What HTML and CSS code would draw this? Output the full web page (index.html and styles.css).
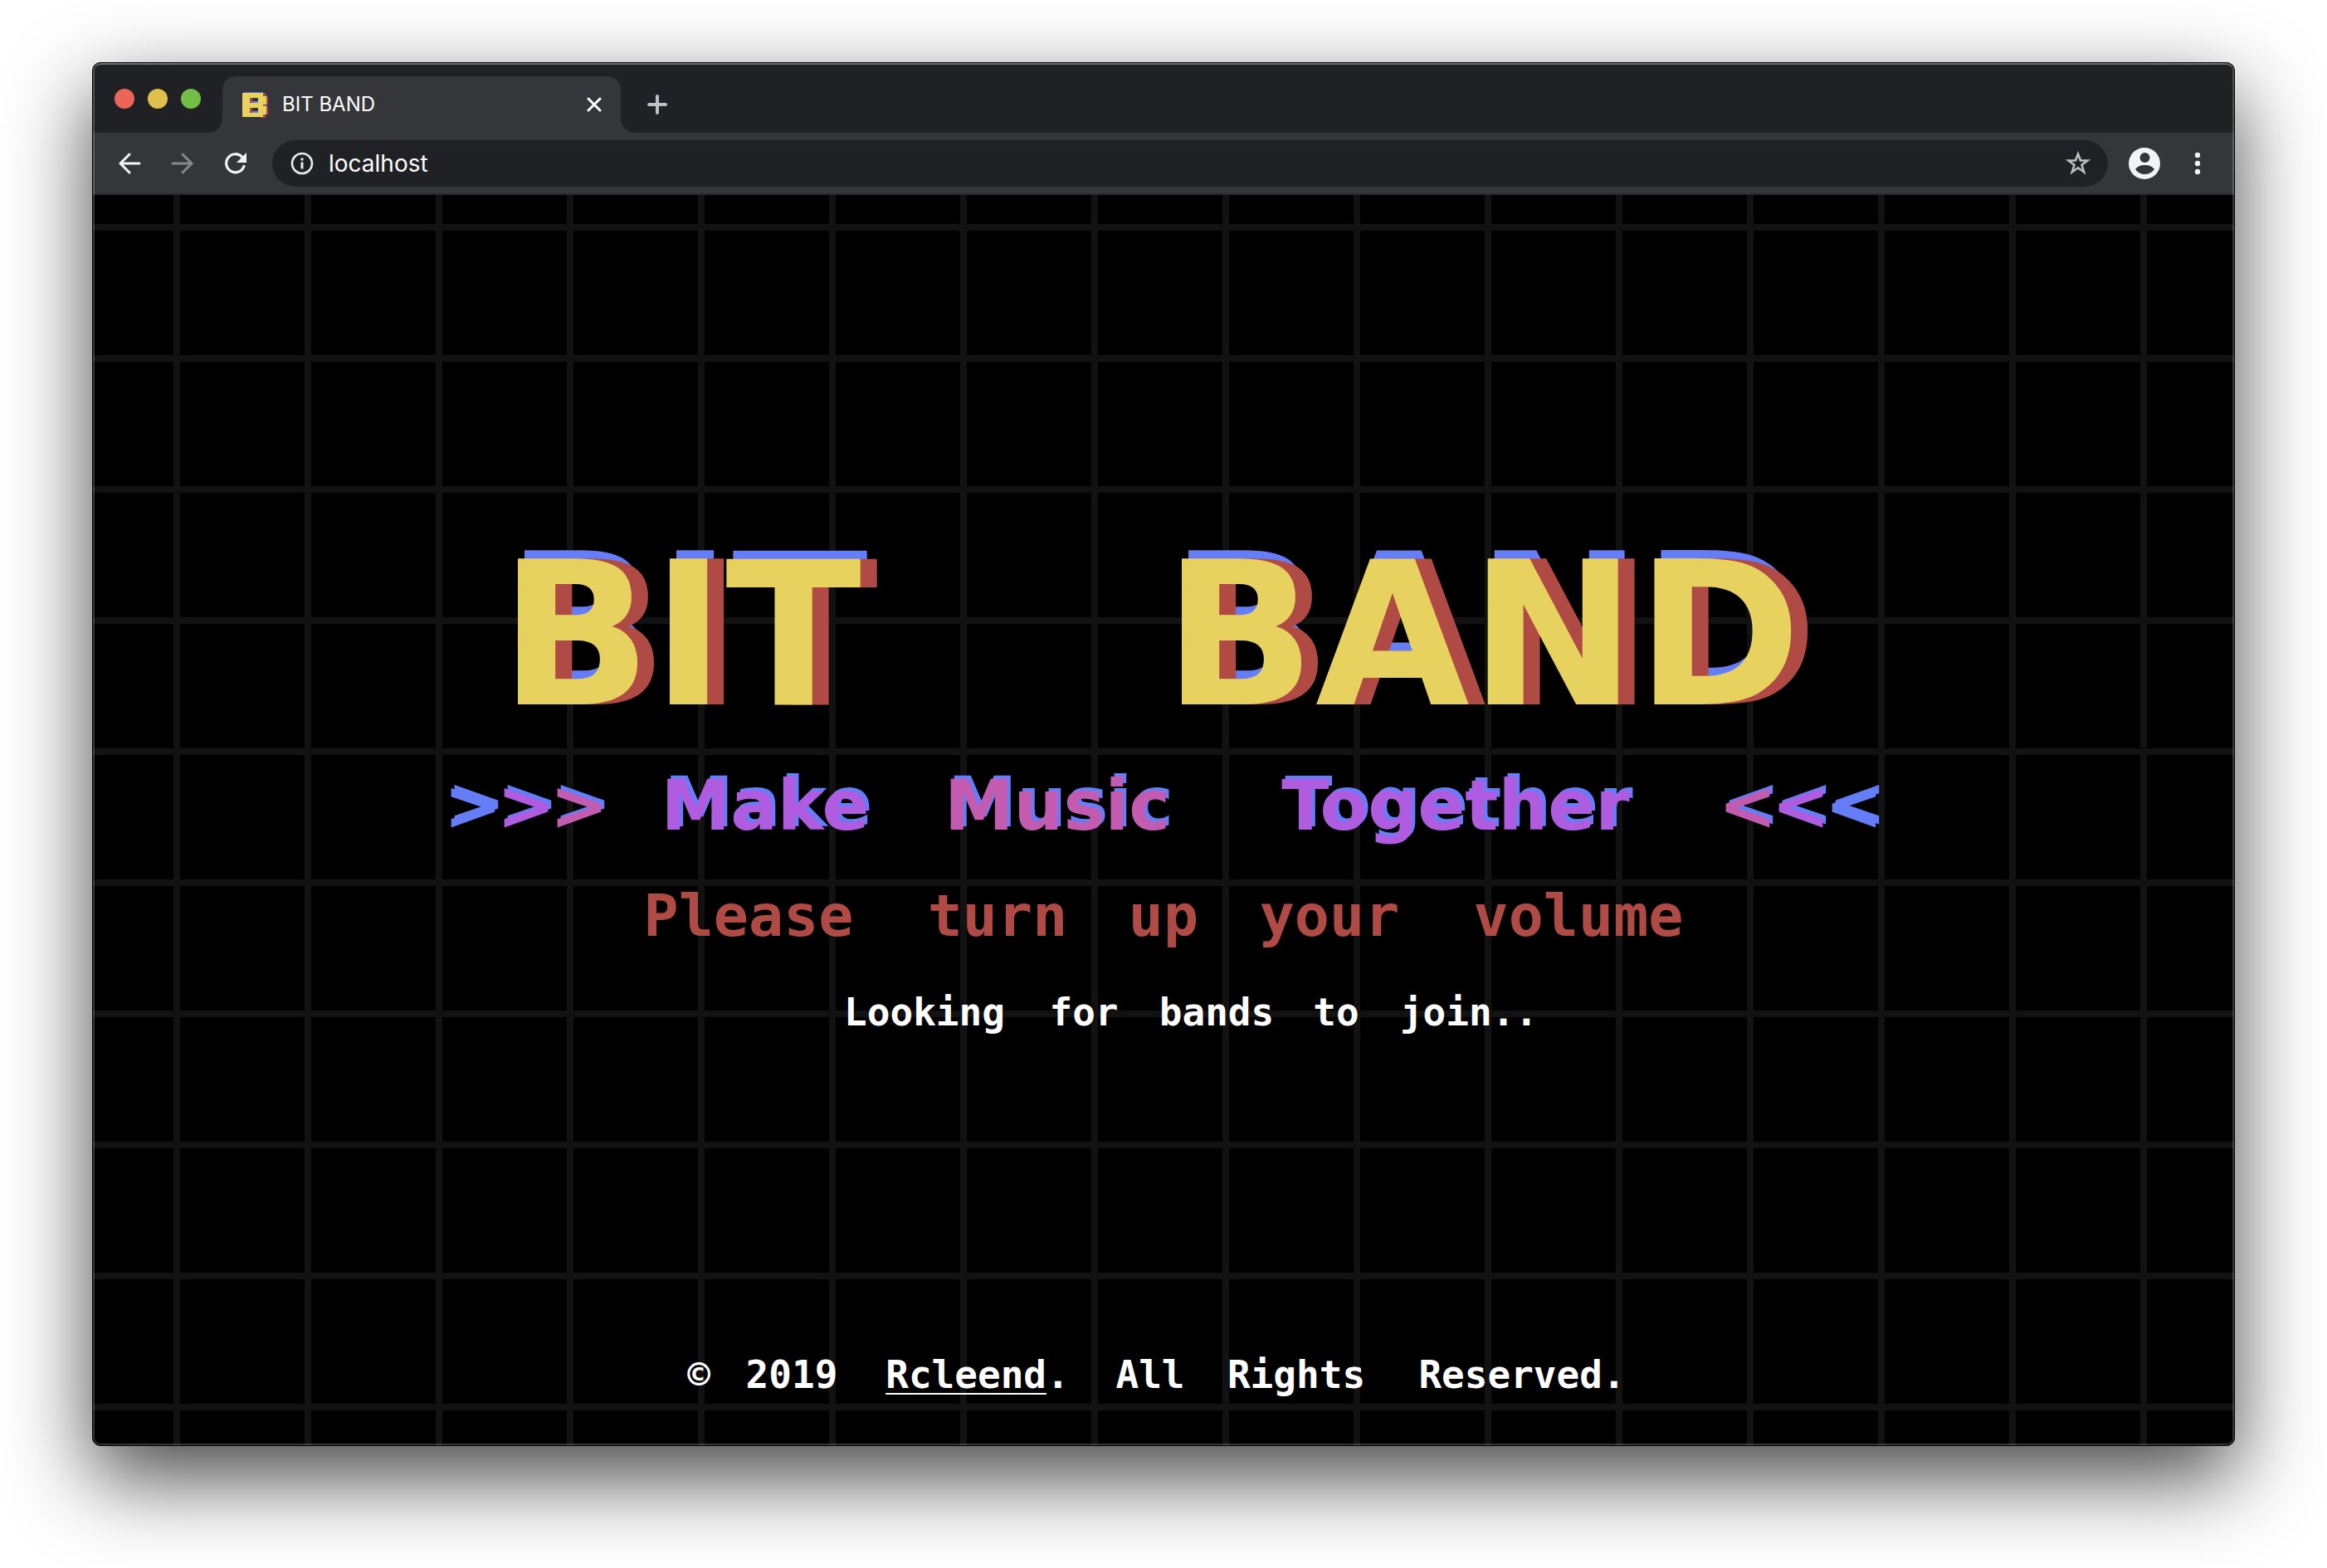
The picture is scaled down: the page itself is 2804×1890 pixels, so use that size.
FILE: index.html
```html
<!DOCTYPE html>
<html lang="en">
<head>
<meta charset="utf-8">
<title>BIT BAND</title>
<link rel="stylesheet" href="styles.css">
</head>
<body>
<div class="window">
  <header class="tabs">
    <div class="lights">
      <button class="light red" aria-label="Close window"></button>
      <button class="light amber" aria-label="Minimise window"></button>
      <button class="light green" aria-label="Zoom window"></button>
    </div>
    <div class="tab">
      <svg class="favicon" viewBox="0 0 32 32" shape-rendering="crispEdges" aria-hidden="true">
        <path fill="#5f6fd0" d="M2 1h24v4H2zM27 5h3v4h-3zM27 17h3v3h-3z"/>
        <path fill="#b04a44" d="M22 2h6v4h3v10h-3v3h3v9h-3v4h-6z"/>
        <path fill="#e8d25f" fill-rule="evenodd" d="M0 2h25v4h4v10h-4v2h4v10h-4v3H0zM9 8v6h10V8zM9 20v6h10v-6z"/>
        <path fill="#b04a44" d="M9 8h3v6H9zM9 20h3v6H9z"/>
        <path fill="#657ef7" d="M12 12h7v2h-7zM12 24h7v2h-7z"/>
      </svg>
      <span class="tab-title">BIT BAND</span>
      <button class="icon-button" aria-label="Close tab">
        <svg width="18" height="18" viewBox="0 0 18 18" fill="none" stroke="#fff" stroke-width="3" stroke-linecap="round"><path d="M2 2l14 14M16 2L2 16"/></svg>
      </button>
    </div>
    <button class="icon-button new-tab" aria-label="New tab">
      <svg width="24" height="24" viewBox="0 0 24 24" fill="none" stroke="#bdc1c6" stroke-width="4" stroke-linecap="round"><path d="M12 2v20M2 12h20"/></svg>
    </button>
  </header>

  <nav class="toolbar">
    <div class="nav-buttons">
      <button class="icon-button" aria-label="Back">
        <svg width="28" height="28" viewBox="0 0 28 28" fill="none" stroke="#f1f3f4" stroke-width="3" stroke-linecap="round"><path d="M26 14H3M14 3L3 14l11 11"/></svg>
      </button>
      <button class="icon-button" aria-label="Forward">
        <svg width="28" height="28" viewBox="0 0 28 28" fill="none" stroke="#87888a" stroke-width="3" stroke-linecap="round"><path d="M2 14h23M14 3l11 11-11 11"/></svg>
      </button>
      <button class="icon-button" aria-label="Reload">
        <svg width="28" height="28" viewBox="0 0 28 28"><path d="M24 17.500A11 11 0 1 1 21.500 6" fill="none" stroke="#f1f3f4" stroke-width="3.200" stroke-linecap="round"/><path fill="#f1f3f4" d="M27 1v12H15z"/></svg>
      </button>
    </div>
    <div class="address">
      <svg width="28" height="28" viewBox="0 0 28 28" aria-hidden="true"><circle cx="14" cy="14" r="12" fill="none" stroke="#e8eaed" stroke-width="2.600"/><path fill="#e8eaed" d="M12.500 7.500h3v3h-3zM12.500 12.500h3v8h-3z"/></svg>
      <input class="url" type="text" value="localhost" aria-label="Address">
      <button class="icon-button" aria-label="Bookmark this tab">
        <svg width="32" height="32" viewBox="0 0 32 32" fill="none" stroke="#bdbdbd" stroke-width="2.600"><path d="M16 4.500l3 8h8.500l-7 5.300 2.700 8.700-7.200-5.200-7.200 5.200 2.700-8.700-7-5.300H13z"/></svg>
      </button>
    </div>
    <button class="icon-button" aria-label="Profile">
      <svg width="38" height="38" viewBox="0 0 38 38"><circle cx="19" cy="19" r="19" fill="#f1f3f4"/><circle cx="19.500" cy="12" r="6" fill="#35363a"/><path fill="#35363a" d="M8 26c3-4 7-5 11.500-5S28 22 31 26c-3 4-7 6-11.500 6S11 30 8 26z"/></svg>
    </button>
    <button class="icon-button menu" aria-label="Menu">
      <svg width="8" height="28" viewBox="0 0 8 28" fill="#f1f3f4"><circle cx="4" cy="4" r="3.200"/><circle cx="4" cy="14" r="3.200"/><circle cx="4" cy="24" r="3.200"/></svg>
    </button>
  </nav>

  <div class="page">
    <main class="hero">
      <h1 class="line title"><span class="w3">BIT</span> <span class="w4">BAND</span></h1>
      <h2 class="line tagline">
        <span class="arrows w3"><span class="blue">&gt;</span><span>&gt;</span><span class="pink">&gt;</span></span>
        <span class="w4">Make</span>
        <span class="w5 pink">Music</span>
        <span class="w8">Together</span>
        <span class="arrows w3"><span class="pink">&lt;</span><span>&lt;</span><span class="blue">&lt;</span></span>
      </h2>
      <p class="line notice"><span class="w6">Please</span> <span class="w4">turn</span> <span class="w2">up</span> <span class="w4">your</span> <span class="w6">volume</span></p>
      <p class="line small status"><span class="w7">Looking</span> <span class="w3">for</span> <span class="w5">bands</span> <span class="w2">to</span> <span class="w6">join..</span></p>
    </main>
    <footer class="line small"><span class="w1">©</span> <span class="w4">2019</span> <span class="w8"><a href="#">Rcleend</a>.</span> <span class="w3">All</span> <span class="w6">Rights</span> <span class="w9">Reserved.</span></footer>
  </div>
</div>
</body>
</html>
```
FILE: styles.css
```css
* {
  box-sizing: border-box;
}

body {
  margin: 0;
  min-height: 100vh;
  padding: 75px 111px 147px;
  display: flex;
  background: #fff;
  font-family: Inter, "Liberation Sans", sans-serif;
}

/* Browser window */
.window {
  position: relative;
  flex: 1;
  display: flex;
  flex-direction: column;
  overflow: hidden;
  border: 1px solid #000;
  border-radius: 10px;
  background: #000;
  box-shadow: 0 38px 100px rgba(0, 0, 0, 0.73);
}

.window::after {
  content: "";
  position: absolute;
  inset: 0;
  border: 2px solid rgba(255, 255, 255, 0.2);
  border-top-color: rgba(255, 255, 255, 0.35);
  border-radius: 9px;
  pointer-events: none;
}

button {
  padding: 0;
  border: 0;
  background: none;
}

.icon-button {
  display: flex;
  align-items: center;
  justify-content: center;
}

.tabs {
  display: flex;
  align-items: flex-end;
  height: 84px;
  padding-left: 26px;
  background: #202124;
}

.lights {
  display: flex;
  gap: 16px;
  width: 130px;
  padding-bottom: 29px;
}

.light {
  width: 24px;
  height: 24px;
  border-radius: 50%;
}

.red {
  background: #ed6559;
}

.amber {
  background: #e0c04c;
}

.green {
  background: #72be47;
}

.tab {
  position: relative;
  display: flex;
  align-items: center;
  gap: 16px;
  width: 480px;
  height: 68px;
  padding: 0 23px 0 24px;
  border-radius: 16px 16px 0 0;
  background: #35363a;
}

/* Curved feet where the tab meets the toolbar */
.tab::before,
.tab::after {
  content: "";
  position: absolute;
  bottom: 0;
  width: 16px;
  height: 16px;
}

.tab::before {
  right: 100%;
  background: radial-gradient(circle at 0 0, transparent 15px, #35363a 16px);
}

.tab::after {
  left: 100%;
  background: radial-gradient(circle at 100% 0, transparent 15px, #35363a 16px);
}

.favicon {
  width: 32px;
  height: 32px;
}

.tab-title {
  flex: 1;
  color: #fff;
  font-size: 24px;
  line-height: 32px;
}

.new-tab {
  height: 68px;
  margin-left: 32px;
}

.toolbar {
  display: flex;
  align-items: center;
  height: 75px;
  padding: 0 40px 0 30px;
  border-bottom: 2px solid #2a2a2b;
  background: #35363a;
}

.nav-buttons {
  display: flex;
  gap: 36px;
  margin-right: 30px;
}

.address {
  flex: 1;
  display: flex;
  align-items: center;
  gap: 18px;
  height: 56px;
  margin-right: 25px;
  padding: 0 20px 0 22px;
  border-radius: 28px;
  background: #202124;
}

.url {
  flex: 1;
  padding: 0;
  border: 0;
  outline: 0;
  background: none;
  color: #fff;
  font: 28px/36px Inter, "Liberation Sans", sans-serif;
}

.menu {
  margin-left: 41px;
}

/* Web page with its tiled grid */
.page {
  flex: 1;
  display: flex;
  flex-direction: column;
  align-items: center;
  padding-bottom: 60px;
  background-color: #000;
  background-image:
    linear-gradient(#121212 8px, transparent 8px),
    linear-gradient(90deg, #121212 8px, transparent 8px);
  background-position: 97px 35px;
  background-size: 158px 158px;
  color: #fff;
  font-family: "DejaVu Sans Mono", "Liberation Mono", monospace;
  font-weight: 700;
}

.hero {
  flex: 1;
  display: flex;
  flex-direction: column;
  align-items: center;
  justify-content: center;
  padding-top: 44px;
}

/* Each line is set on a character grid: a word spans one cell per letter,
   and the column gap between two words is one more cell. */
.line {
  display: flex;
  justify-content: center;
  gap: var(--cell);
  margin: 0;
  white-space: nowrap;
  text-align: center;
}

.w1 { width: var(--cell); }
.w2 { width: calc(var(--cell) * 2); }
.w3 { width: calc(var(--cell) * 3); }
.w4 { width: calc(var(--cell) * 4); }
.w5 { width: calc(var(--cell) * 5); }
.w6 { width: calc(var(--cell) * 6); }
.w7 { width: calc(var(--cell) * 7); }
.w8 { width: calc(var(--cell) * 8); }
.w9 { width: calc(var(--cell) * 9); }

.title {
  --cell: 200px;
  margin-bottom: 55px;
  color: #e8d25f;
  font-family: "DejaVu Sans", "Liberation Sans", sans-serif;
  font-size: 240px;
  line-height: 200px;
  text-align: left;
  text-shadow: 20px 0 #b04a44, 8px -10px #657ef7;
}

.tagline {
  --cell: 64px;
  margin-bottom: 43px;
  color: #b05ce0;
  font-family: "DejaVu Sans", "Liberation Sans", sans-serif;
  font-size: 84px;
  line-height: 100px;
  text-shadow: 4px -4px #657ef7;
}

.arrows {
  display: grid;
  grid-template-columns: repeat(3, var(--cell));
  justify-items: center;
}

.blue {
  color: #657ef7;
}

.pink {
  color: #c35bb0;
}

.notice {
  --cell: 50px;
  margin-bottom: 51px;
  color: #b04a44;
  font-size: 70px;
  line-height: 80px;
}

.small {
  --cell: 32px;
  font-size: 46px;
  line-height: 50px;
}

.status {
  padding-left: 64px;
}

.small a {
  color: inherit;
  text-decoration: underline;
  text-decoration-thickness: 2px;
  text-underline-offset: 6px;
}
```
